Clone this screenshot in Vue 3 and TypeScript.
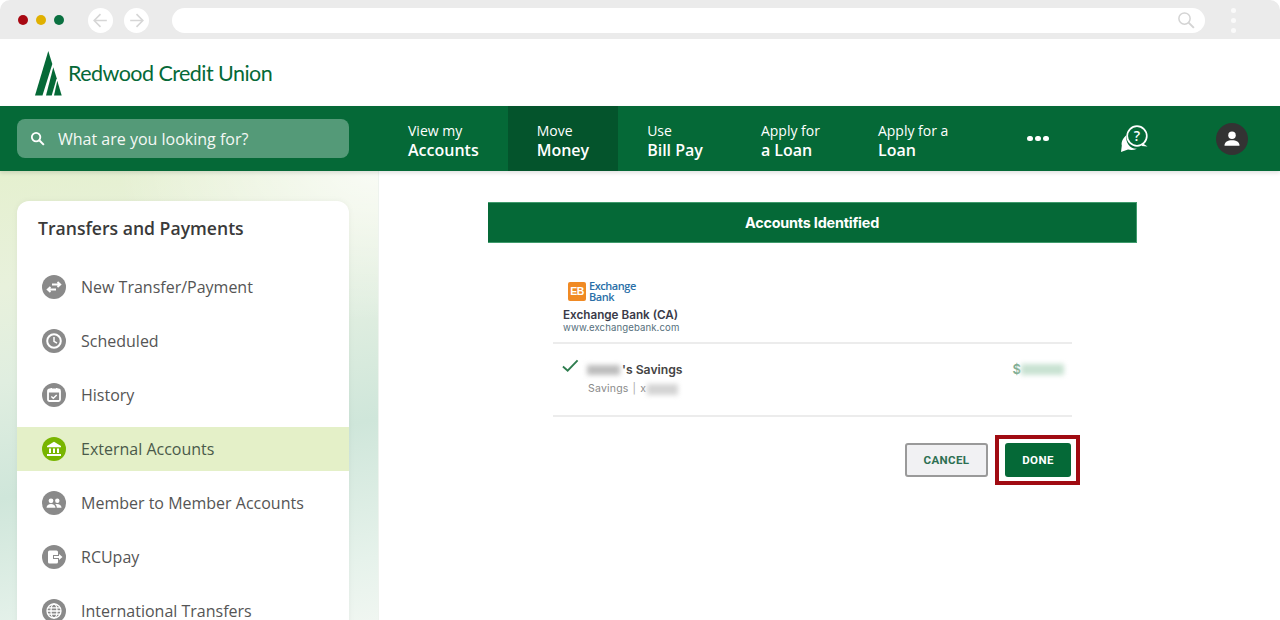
<script setup lang="ts">
interface MenuItem { label: string; icon: string; active?: boolean }
const nav = [
  { top: 'View my', bottom: 'Accounts' },
  { top: 'Move', bottom: 'Money', active: true },
  { top: 'Use', bottom: 'Bill Pay' },
  { top: 'Apply for', bottom: 'a Loan' },
  { top: 'Apply for a', bottom: 'Loan' }
]
const menu: MenuItem[] = [
  { label: 'New Transfer/Payment', icon: 'transfer' },
  { label: 'Scheduled', icon: 'clock' },
  { label: 'History', icon: 'history' },
  { label: 'External Accounts', icon: 'bank', active: true },
  { label: 'Member to Member Accounts', icon: 'people' },
  { label: 'RCUpay', icon: 'pay' },
  { label: 'International Transfers', icon: 'globe' }
]
</script>

<template>
  <div class="page">
    <div class="chrome">
      <div class="lights"><i class="red"></i><i class="yellow"></i><i class="green"></i></div>
      <div class="arrows">
        <span class="round"><svg viewBox="0 0 24 24" width="19" height="19"><path d="M20 12H4.500M12 4l-8 8 8 8" fill="none" stroke="#d6d6d6" stroke-width="2"/></svg></span>
        <span class="round"><svg viewBox="0 0 24 24" width="19" height="19"><path d="M4 12h15.500M12 4l8 8-8 8" fill="none" stroke="#d6d6d6" stroke-width="2"/></svg></span>
      </div>
      <div class="address">
        <svg viewBox="0 0 24 24" width="18" height="18"><circle cx="10" cy="10" r="7.500" fill="none" stroke="#d4d4d4" stroke-width="2"/><path d="M15.500 15.500l7 7" stroke="#d4d4d4" stroke-width="2.500"/></svg>
      </div>
      <div class="kebab"><i></i><i></i><i></i></div>
    </div>

    <header class="brand">
      <svg class="tree" viewBox="0 0 27 45" width="27" height="45">
        <path d="M13.300 0 L17.300 13 L7.500 44.500 L0 44.500 Z" fill="#056937" />
        <path d="M18.300 16.300 L21.700 27.300 L16.700 44.500 L11 44.500 Z" fill="#056937" />
        <path d="M22.300 29.700 L26.700 44.500 L19 44.500 Z" fill="#056937" />
      </svg>
      <span class="brand-name">Redwood Credit Union</span>
    </header>

    <nav class="topnav">
      <div class="search">
        <svg viewBox="0 0 24 24" width="17" height="17"><circle cx="10" cy="10" r="6" fill="none" stroke="#fff" stroke-width="2.600"/><path d="M14.500 14.500l6.500 6.500" stroke="#fff" stroke-width="2.800"/></svg>
        <span>What are you looking for?</span>
      </div>
      <div class="nav-items">
        <a v-for="n in nav" :key="n.bottom" class="nav-item" :class="{ on: n.active }">
          <span class="nav-top">{{ n.top }}</span>
          <strong class="nav-bottom">{{ n.bottom }}</strong>
        </a>
      </div>
      <div class="nav-tools">
        <div class="more"><i></i><i></i><i></i></div>
        <svg class="help" viewBox="0 0 28 28" width="28" height="28">
          <circle cx="17" cy="11" r="9.800" fill="none" stroke="#fff" stroke-width="1.700"/>
          <path d="M23 18.500l4.500 3-6-.5z" fill="#fff"/>
          <path d="M6.500 10C3 13 1 17 1.800 20.500L1 27l7-2.500c3 .8 6 .6 9-.8-6.500.5-12-5.500-10.500-13.700z" fill="#fff"/>
          <text x="17" y="16" text-anchor="middle" class="q">?</text>
        </svg>
        <span class="avatar">
          <svg viewBox="0 0 24 24" width="20" height="20"><circle cx="12" cy="7.500" r="4.500" fill="#fff"/><path d="M3 20c0-4.500 4-6.500 9-6.500s9 2 9 6.500z" fill="#fff"/></svg>
        </span>
      </div>
    </nav>

    <div class="body">
      <aside class="side">
        <div class="card">
          <h2>Transfers and Payments</h2>
          <ul>
            <li v-for="m in menu" :key="m.label" :class="{ active: m.active }">
              <span class="ico">
                <svg viewBox="0 0 24 24" width="24" height="24">
                  <g v-if="m.icon === 'transfer'" fill="none" stroke="#fff" stroke-width="1.800">
                    <path d="M10 9.500h8M15.500 7l2.800 2.500-2.800 2.500" />
                    <path d="M14 14.500H6M8.500 12l-2.800 2.500L8.500 17" />
                  </g>
                  <g v-else-if="m.icon === 'clock'" fill="none" stroke="#fff">
                    <circle cx="12" cy="12" r="6.800" stroke-width="2"/>
                    <path d="M12 8v4.300l3 1.800" stroke-width="1.500"/>
                  </g>
                  <g v-else-if="m.icon === 'history'">
                    <rect x="6" y="6.500" width="12" height="11.500" rx="1.500" fill="none" stroke="#fff" stroke-width="1.800"/>
                    <path d="M6 6.500h12v3H6zM8.500 5h1.500v2H8.500zM14 5h1.500v2H14z" fill="#fff"/>
                    <path d="M9.300 13.500l2 1.800 3.400-3.300" fill="none" stroke="#fff" stroke-width="1.400"/>
                  </g>
                  <g v-else-if="m.icon === 'bank'" fill="#fff">
                    <path d="M12 4.800 19 9v1.300H5V9z"/>
                    <path d="M7 11.500h2v4.500H7zM11 11.500h2v4.500h-2zM15 11.500h2v4.500h-2zM5 17h14v2H5z"/>
                  </g>
                  <g v-else-if="m.icon === 'people'" fill="#fff">
                    <circle cx="9" cy="9.800" r="2.400"/>
                    <circle cx="15.300" cy="9.800" r="2.200"/>
                    <path d="M4.500 16.800c0-2.500 2-3.800 4.500-3.800s4.500 1.300 4.500 3.800z"/>
                    <path d="M14.800 16.800c0-1.500-.5-2.700-1.600-3.500 2.900-.7 6.300.3 6.300 3.500z"/>
                  </g>
                  <g v-else-if="m.icon === 'pay'" fill="#fff">
                    <path d="M7.500 5.500h7a1.500 1.500 0 0 1 1.500 1.500v3h-5v4h5v3a1.500 1.500 0 0 1-1.500 1.500h-7A1.500 1.500 0 0 1 6 17V7a1.500 1.500 0 0 1 1.500-1.500z"/>
                    <path d="M12 11h5V9l3.500 3-3.500 3v-2h-5z"/>
                  </g>
                  <g v-else fill="none" stroke="#fff" stroke-width="1.300">
                    <circle cx="12" cy="12" r="7"/>
                    <ellipse cx="12" cy="12" rx="3" ry="7"/>
                    <path d="M5 12h14M6 8.800h12M6 15.200h12"/>
                  </g>
                </svg>
              </span>
              <span class="lbl">{{ m.label }}</span>
            </li>
          </ul>
        </div>
      </aside>

      <main class="main">
        <div class="banner">Accounts Identified</div>
        <section class="panel">
          <div class="bank-logo">
            <span class="eb">EB</span>
            <span class="eb-name">Exchange Bank</span>
          </div>
          <div class="bank-name">Exchange Bank (CA)</div>
          <div class="bank-url">www.exchangebank.com</div>
          <div class="acct">
            <svg class="check" viewBox="0 0 18 14" width="17" height="14"><path d="M1 7.500l5 4.500L16.500 1" fill="none" stroke="#2f7d4f" stroke-width="2"/></svg>
            <div class="acct-info">
              <div class="acct-name"><i class="blur b1"></i>'s Savings</div>
              <div class="acct-sub">Savings <span class="sep">|</span> x<i class="blur b2"></i></div>
            </div>
            <div class="amount">$<i class="blur b3"></i></div>
          </div>
          <div class="actions">
            <button class="cancel">CANCEL</button>
            <div class="mark"><button class="done">DONE</button></div>
          </div>
        </section>
      </main>
    </div>
  </div>
</template>

<style scoped>
.page { width: 1280px; height: 620px; overflow: hidden; display: flex; flex-direction: column; background: #fff; font-family: "Open Sans", sans-serif; }
.chrome { height: 39px; flex: none; display: flex; align-items: center; background: #ebebeb; border-radius: 10px 10px 0 0; padding: 1px 0 0 18px; box-sizing: border-box; }
.lights { display: flex; gap: 8px; width: 70px; flex: none; }
.lights i { width: 10px; height: 10px; border-radius: 50%; }
.red { background: #a80812; }
.yellow { background: #e0b000; }
.green { background: #0a7040; }
.arrows { display: flex; gap: 11px; margin-right: 23px; }
.round { width: 25px; height: 25px; border-radius: 50%; background: #fff; display: flex; align-items: center; justify-content: center; }
.address { width: 1033px; height: 25px; border-radius: 12.500px; background: #fff; display: flex; align-items: center; justify-content: flex-end; padding-right: 10px; box-sizing: border-box; }
.kebab { display: flex; flex-direction: column; gap: 5px; margin-left: 26px; }
.kebab i { width: 5px; height: 5px; border-radius: 50%; background: #fafafa; }
.brand { height: 67px; flex: none; display: flex; align-items: flex-end; padding: 0 0 10px 35px; box-sizing: border-box; }
.tree { display: block; }
.brand-name { margin: 0 0 10px 6px; font-family: Lato, sans-serif; font-size: 21.500px; line-height: 26px; color: #056937; letter-spacing: -0.55px; }
.topnav { height: 65px; flex: none; display: flex; background: #056937; box-shadow: 0 2px 4px rgba(0, 0, 0, .12); position: relative; z-index: 1; }
.search { width: 332px; height: 39px; margin: 13px 30px 0 17px; flex: none; box-sizing: border-box; padding-left: 12px; display: flex; align-items: center; gap: 12px; background: #549a78; border-radius: 8px; color: #f4f8f5; font-size: 16px; }
.nav-items { display: flex; }
.nav-item { display: flex; flex-direction: column; justify-content: center; padding: 4px 29px 0; color: #fff; }
.nav-item.on { background: #04542c; }
.nav-top { font-size: 14px; line-height: 19px; }
.nav-bottom { font-size: 16px; line-height: 21px; font-weight: 600; }
.nav-tools { display: flex; align-items: center; }
.more { display: flex; gap: 2.500px; margin-left: 50px; width: 21px; }
.more i { width: 5.500px; height: 5.500px; flex: none; border-radius: 50%; background: #fff; }
.help { margin-left: 72px; }
.q { font: 600 14px "Open Sans", sans-serif; fill: #fff; }
.avatar { width: 32px; height: 32px; margin-left: 68px; border-radius: 50%; background: #333; display: flex; align-items: center; justify-content: center; }
.body { flex: 1; display: flex; min-height: 0; }
.side { width: 379px; flex: none; box-sizing: border-box; padding: 30px 30px 0 17px; border-right: 1px solid #eef3ee; background: radial-gradient(ellipse 260px 150px at 100% 0, rgba(255, 255, 255, .75), transparent), linear-gradient(168deg, #e5f0cf 0%, #e8f1dc 22%, #e0eee0 40%, #cfe6da 62%, #e6f2eb 88%, #f0f6f1 100%); }
.card { background: #fff; border-radius: 12px 12px 0 0; height: 460px; width: 332px; box-shadow: 0 0 6px rgba(0, 0, 0, .05); }
h2 { margin: 0; padding: 15px 21px 0; font-size: 17.600px; line-height: 25px; font-weight: 600; color: #3a3a3a; }
ul { list-style: none; margin: 24px 0 0; padding: 0; display: flex; flex-direction: column; gap: 10px; }
li { height: 44px; display: flex; align-items: center; padding-left: 25px; gap: 15px; }
li.active { background: #e4f0c8; }
.ico { width: 24px; height: 24px; border-radius: 50%; background: #8a8a8a; flex: none; }
li.active .ico { background: #78b500; }
.ico svg { display: block; }
.lbl { font-size: 16px; color: #555; }
li.active .lbl { color: #4a5a4a; }
.main { flex: 1; padding: 31px 0 0 109px; }
.banner { width: 649px; height: 41px; background: #056937; color: #fff; display: flex; align-items: center; justify-content: center; font: 700 14.400px Inter, sans-serif; letter-spacing: -0.2px; box-sizing: border-box; border: 1px solid #3f9a6c; border-width: 1px 1px 1px 0; }
.panel { width: 519px; margin: 37px 0 0 65px; font-family: Inter, sans-serif; }
.bank-logo { display: flex; align-items: center; gap: 3px; padding-left: 15px; height: 22px; }
.eb { width: 18px; height: 19px; background: #f08a24; color: #fff; border-radius: 2px; font: 700 10.500px/19px "Liberation Sans", sans-serif; letter-spacing: -0.5px; text-align: center; flex: none; }
.eb-name { width: 50px; font: 600 11px/11px "Open Sans", sans-serif; color: #2a6fa8; letter-spacing: -0.45px; }
.bank-name { margin: 6px 0 0 10px; font-size: 11.700px; line-height: 15px; font-weight: 600; color: #3a3a48; }
.bank-url { margin-left: 10px; font-size: 9.600px; line-height: 10px; color: #566f7c; letter-spacing: .1px; }
.acct { margin-top: 9px; height: 75px; box-sizing: border-box; border-top: 2px solid #ececec; border-bottom: 2px solid #ececec; display: flex; align-items: flex-start; padding-top: 15px; }
.check { margin-left: 9px; flex: none; }
.acct-info { margin-left: 7px; }
.acct-name { font-size: 12.200px; line-height: 18px; font-weight: 600; color: #444; display: flex; align-items: center; margin-top: 2px; }
.acct-sub { font-size: 10.500px; line-height: 16px; color: #8a8a8a; margin-top: 2px; margin-left: 2px; display: flex; align-items: center; gap: 4px; letter-spacing: .2px; }
.sep { color: #aaa; }
.blur { display: block; background: #bdbdbd; filter: blur(2.500px); }
.b1 { width: 33px; height: 10px; margin: 0 2px 0 1px; }
.b2 { width: 31px; height: 11px; margin-left: -3px; background: #d4d4d4; }
.amount { margin: 1px 8px 0 auto; display: flex; align-items: center; font-size: 13px; font-weight: 600; line-height: 18px; color: #7fae94; }
.b3 { width: 43px; height: 11px; background: #c8e2d2; }
.actions { display: flex; justify-content: flex-end; align-items: center; margin-top: 18px; padding-right: 1px; margin-right: -9px; gap: 7px; }
button { font: 700 11.500px Roboto, sans-serif; letter-spacing: .4px; height: 34px; border-radius: 3px; cursor: pointer; padding: 0; }
.cancel { width: 83px; background: #f1f1f3; border: 2px solid #9a9a9a; color: #2d6f52; }
.mark { border: 4px solid #a00b12; padding: 4px 5px 4px 6px; }
.done { width: 66px; display: block; background: #056937; border: none; color: #fff; }
</style>
